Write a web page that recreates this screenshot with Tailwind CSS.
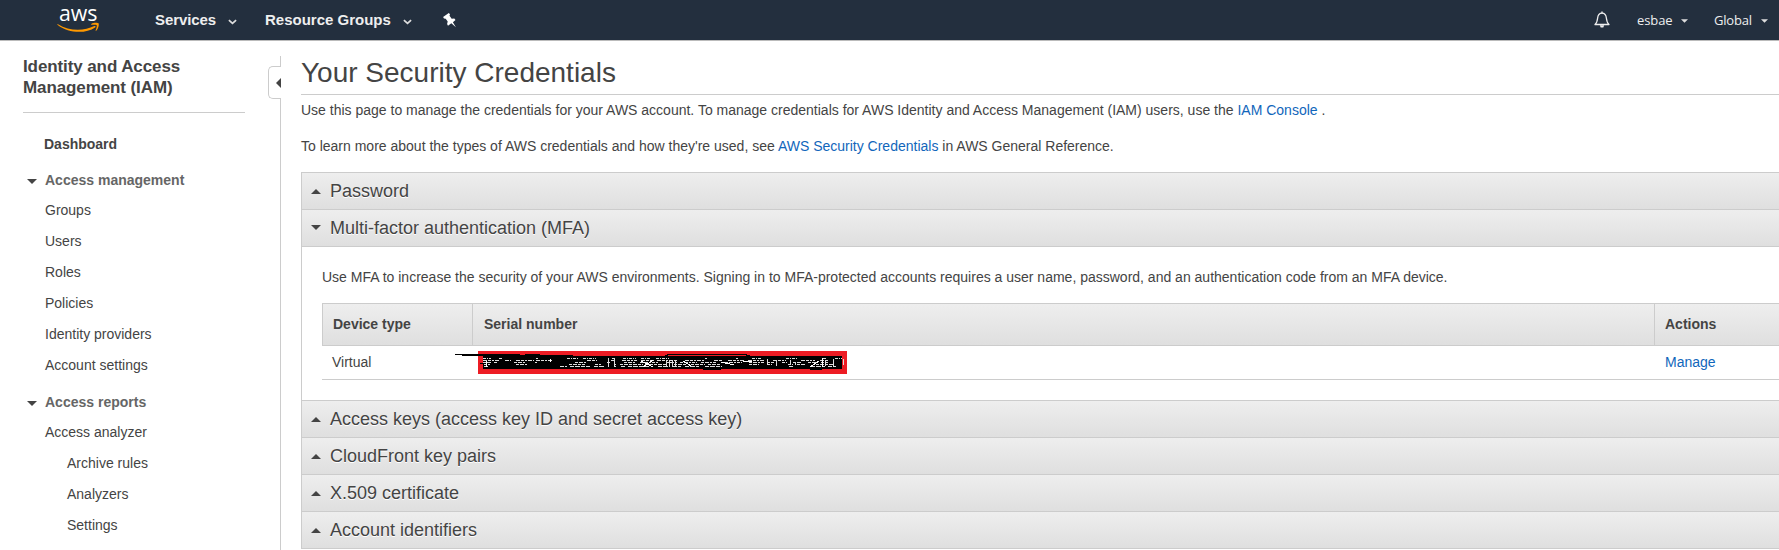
<!DOCTYPE html>
<html lang="en">
<head>
<meta charset="utf-8">
<title>IAM - Your Security Credentials</title>
<script src="https://cdn.jsdelivr.net/npm/@tailwindcss/browser@4"></script>
</head>
<body class="h-[550px] w-[1779px] overflow-hidden bg-white font-['Liberation_Sans',Arial,sans-serif] text-[14px] text-[#444] whitespace-nowrap">
<header class="flex h-[41px] items-center border-b border-[#bbb] bg-[#232f3e] text-white">
  <svg class="ml-[57px] h-[40px] w-[44px] shrink-0" viewBox="57 0 44 40">
    <text x="59" y="20.500" font-family="Open Sans" font-size="21.500" font-weight="500" fill="#fff" textLength="38.5" lengthAdjust="spacingAndGlyphs">aws</text>
    <path d="M58 24.200c11 7 26 7 36.300 1.900c1.200-.5 1.900.5.800 1.300c-9.500 6.600-26.500 6-37.400-2.500c-.6-.5-.2-1 .3-.7z" fill="#f90"/>
    <path d="M91.300 24c2.200-1.500 6.600-1.300 7.300-.6c.6.9-.2 5.300-2.400 7.300c-.4.3-.8.1-.6-.4c.7-1.600 1.500-4.300 1.100-5c-.4-.7-3.200-.7-5-.5c-.6.100-.8-.5-.4-.8z" fill="#f90"/>
  </svg>
  <span class="ml-[54px] w-[61px] text-[15px] leading-[20px] font-bold tracking-[-0.1px] text-[#eee]">Services</span>
  <svg class="ml-[12px] mt-[3px] h-[6px] w-[9px]" viewBox="0 0 10 6"><path d="M1 .8l4 3.700l4-3.700" fill="none" stroke="#ddd" stroke-width="1.900"/></svg>
  <span class="ml-[28px] w-[127px] text-[15px] leading-[20px] font-bold text-[#eee]">Resource Groups</span>
  <svg class="ml-[11px] mt-[3px] h-[6px] w-[9px]" viewBox="0 0 10 6"><path d="M1 .8l4 3.700l4-3.700" fill="none" stroke="#ddd" stroke-width="1.900"/></svg>
  <svg class="ml-[31px] h-[15px] w-[14px]" viewBox="444 13 14 15"><path d="M449.800 13l1.200 1.300l-.5 1.500l2.200 3l2.600-.3l1.200 1.400l-2.600 2.300l3 5l-4.600-4l-3.300 2.500l-.9-1.600l.6-2.500l-2-2.900l-1.700-.1l-.9-1.500z" fill="#fff"/></svg>
  <svg class="ml-auto h-[18px] w-[18px]" viewBox="0 0 18 18"><path d="M2 13.500h14c-2-1.500-2.300-3-2.600-6.200C13.100 4 11.500 2.200 9 2.200S4.900 4 4.600 7.300C4.300 10.500 4 12 2 13.500z" fill="none" stroke="#eee" stroke-width="1.300" stroke-linejoin="round"/><path d="M6.800 14.300h4.400l-.9 2.200H7.700zM8.300 .6h1.400v2H8.300z" fill="#eee"/></svg>
  <span class="ml-[26px] w-[36px] font-['Open_Sans','Noto_Sans',sans-serif] text-[13px] leading-[20px] tracking-[-0.1px] text-[#eee]">esbae</span>
  <svg class="ml-[8px] mt-[2px] h-[4px] w-[7px]" viewBox="0 0 8 4"><path d="M0 0h8L4 4z" fill="#ddd"/></svg>
  <span class="ml-[26px] w-[38px] font-['Open_Sans','Noto_Sans',sans-serif] text-[13px] leading-[20px] tracking-[-0.2px] text-[#eee]">Global</span>
  <svg class="ml-[9px] mr-[11px] mt-[2px] h-[4px] w-[7px]" viewBox="0 0 8 4"><path d="M0 0h8L4 4z" fill="#ddd"/></svg>
</header>
<div class="flex h-[509px]">
  <nav class="w-[268px] shrink-0 pl-[23px] pt-[15px]">
    <h2 class="h-[57px] w-[222px] border-b border-[#ccc] text-[17px] leading-[21px] font-bold tracking-[-0.1px]">Identity and Access<br>Management (IAM)</h2>
    <div class="mt-[16px] h-[36px] pl-[21px] leading-[31px] font-bold">Dashboard</div>
    <div class="flex h-[30px] items-center font-bold text-[#666]"><svg class="mr-[8px] ml-[4px] mt-[2px] h-[5px] w-[10px]" viewBox="0 0 10 5"><path d="M0 0h10L5 5z" fill="#444"/></svg>Access management</div>
    <ul class="pl-[22px] leading-[31px]"><li>Groups</li><li>Users</li><li>Roles</li><li>Policies</li><li>Identity providers</li><li>Account settings</li></ul>
    <div class="mt-[6px] flex h-[30px] items-center font-bold text-[#666]"><svg class="mr-[8px] ml-[4px] mt-[2px] h-[5px] w-[10px]" viewBox="0 0 10 5"><path d="M0 0h10L5 5z" fill="#444"/></svg>Access reports</div>
    <ul class="pl-[22px] leading-[31px]"><li>Access analyzer</li><li class="pl-[22px]">Archive rules</li><li class="pl-[22px]">Analyzers</li><li class="pl-[22px]">Settings</li></ul>
  </nav>
  <div class="flex w-[13px] shrink-0 flex-col pt-[15px]">
    <div class="h-[10px] border-r border-[#ccc]"></div>
    <div class="flex h-[33px] items-center justify-end rounded-l-[5px] border border-r-0 border-[#ccc]"><svg class="h-[10px] w-[5px]" viewBox="0 0 5 10"><path d="M5 0v10L0 5z" fill="#444"/></svg></div>
    <div class="flex-1 border-r border-[#ccc]"></div>
  </div>
  <main class="ml-[20px] w-[1478px] shrink-0 pt-[14px]">
    <h1 class="h-[40px] border-b border-[#ccc] text-[28px] leading-[35px]">Your Security Credentials</h1>
    <p class="mt-[5px] leading-[20px]">Use this page to manage the credentials for your AWS account. To manage credentials for AWS Identity and Access Management (IAM) users, use the <a class="text-[#1166bb]">IAM Console</a> .</p>
    <p class="mt-[16px] leading-[20px]">To learn more about the types of AWS credentials and how they're used, see <a class="text-[#1166bb]">AWS Security Credentials</a> in AWS General Reference.</p>
    <section class="mt-[16px] border-b border-l border-[#ccc]">
      <h3 class="flex h-[37px] items-center border-t border-[#ccc] bg-linear-to-b from-[#eee] to-[#dfdfdf] pl-[9px] text-[18px] [text-shadow:0_1px_0_#fff]"><svg class="mr-[9px] h-[5px] w-[10px]" viewBox="0 0 10 5"><path d="M0 5h10L5 0z" fill="#444"/></svg>Password</h3>
      <h3 class="flex h-[37px] items-center border-t border-[#ccc] bg-linear-to-b from-[#eee] to-[#dfdfdf] pl-[9px] text-[18px] [text-shadow:0_1px_0_#fff]"><svg class="mr-[9px] mb-[2px] h-[5px] w-[10px]" viewBox="0 0 10 5"><path d="M0 0h10L5 5z" fill="#444"/></svg>Multi-factor authentication (MFA)</h3>
      <div class="h-[154px] border-t border-[#ccc] pl-[20px] pt-[20px]">
        <p class="leading-[20px]">Use MFA to increase the security of your AWS environments. Signing in to MFA-protected accounts requires a user name, password, and an authentication code from an MFA device.</p>
        <div class="mt-[16px] grid h-[43px] grid-cols-[150px_1182px_1fr] items-stretch border-y border-l border-[#ccc] bg-linear-to-b from-[#eee] to-[#dfdfdf] leading-[41px] font-bold">
          <div class="border-r border-[#ccc] pl-[10px]">Device type</div><div class="border-r border-[#ccc] pl-[11px]">Serial number</div><div class="pl-[10px]">Actions</div>
        </div>
        <div class="grid h-[34px] grid-cols-[133px_1200px_1fr] border-b border-[#ccc] leading-[32px]">
          <div class="pl-[10px]">Virtual</div>
          <svg class="mt-[2px] h-[28px] w-[400px]" viewBox="455 348 400 28" shape-rendering="crispEdges">
            <path d="M478 351h369v23H478z" fill="#ed1c24"/>
            <path d="M455 354h65v1h5v-1h15v1h33v1h92v-1h2v-1h80v1h3v1h92v13h-20v1h-12v-1h-89v1h-18v-1H483v-5h-3v-1h3v-7h-21v-1h-7z" fill="#000"/>
            <path d="M668 355h78v1h-78z" fill="#ed1c24"/>
            <g fill="none" stroke="#ddd" stroke-width="1">
              <path d="M483 358.500h8m8 0h4m33 0h2m29 0h12m4 0h13m16 0h2m9 0h13m5 0h9m6 0h13m36 0h2m29 0h2m14 0h9m25 0h12m25 0h3m9 0h7" stroke-dasharray="3 1 1 1"/>
              <path d="M483 360.500h17m5 0h6m5 0h18m2 0h16m35 0h10m14 0h4m7 0h15m4 0h13m3 0h21m7 0h19m10 0h8m6 0h17m3 0h17m8 0h13m15 0h14m5 0h8" stroke-dasharray="4 1 3 1 2 1"/>
              <path d="M483 362.500h8m3 0h3m17 0h11m10 0h2m38 0h11m21 0h3m14 0h11m5 0h18m8 0h12m2 0h17m4 0h15m9 0h17m7 0h15m3 0h7m8 0h5m6 0h8m7 0h9m4 0h7" stroke-dasharray="3 1 4 1 2 1"/>
              <path d="M484 364.500h6m26 0h11m42 0h16m10 0h6m7 0h1m6 0h1m4 0h23m2 0h22m7 0h13m4 0h14m3 0h12m29 0h10m8 0h5m16 0h5m4 0h9m10 0h17" stroke-dasharray="3 1 4 1"/>
              <path d="M484 366.500h5m71 0h7m3 0h20m4 0h11m3 0h1m6 0h1m5 0h4m3 0h22m8 0h12m3 0h8m4 0h14m6 0h17m67 0h4m18 0h14m3 0h8" stroke-dasharray="4 1 5 1"/>
              <path d="M608.500 358v9m6-9v9m52-6v6m3-6v6m3-6v6m3-6v6m92-8v6m9-5v6m14-6v5m5-3v3m30-5v6m8-7v8m10-8v6"/>
              <path d="M486 361v6m64-5v-3m91 2l12 6m-10 0l10-7m30 1l8 5m30-4l13 3m9-3l9-1m58 6l9-6m3 6v-9" stroke="#fff"/>
            </g>
          </svg>
          <a class="pl-[10px] text-[#1166bb]">Manage</a>
        </div>
      </div>
      <h3 class="flex h-[37px] items-center border-t border-[#ccc] bg-linear-to-b from-[#eee] to-[#dfdfdf] pl-[9px] text-[18px] [text-shadow:0_1px_0_#fff]"><svg class="mr-[9px] h-[5px] w-[10px]" viewBox="0 0 10 5"><path d="M0 5h10L5 0z" fill="#444"/></svg>Access keys (access key ID and secret access key)</h3>
      <h3 class="flex h-[37px] items-center border-t border-[#ccc] bg-linear-to-b from-[#eee] to-[#dfdfdf] pl-[9px] text-[18px] [text-shadow:0_1px_0_#fff]"><svg class="mr-[9px] h-[5px] w-[10px]" viewBox="0 0 10 5"><path d="M0 5h10L5 0z" fill="#444"/></svg>CloudFront key pairs</h3>
      <h3 class="flex h-[37px] items-center border-t border-[#ccc] bg-linear-to-b from-[#eee] to-[#dfdfdf] pl-[9px] text-[18px] [text-shadow:0_1px_0_#fff]"><svg class="mr-[9px] h-[5px] w-[10px]" viewBox="0 0 10 5"><path d="M0 5h10L5 0z" fill="#444"/></svg>X.509 certificate</h3>
      <h3 class="flex h-[37px] items-center border-t border-[#ccc] bg-linear-to-b from-[#eee] to-[#dfdfdf] pl-[9px] text-[18px] [text-shadow:0_1px_0_#fff]"><svg class="mr-[9px] h-[5px] w-[10px]" viewBox="0 0 10 5"><path d="M0 5h10L5 0z" fill="#444"/></svg>Account identifiers</h3>
    </section>
  </main>
</div>
</body>
</html>
